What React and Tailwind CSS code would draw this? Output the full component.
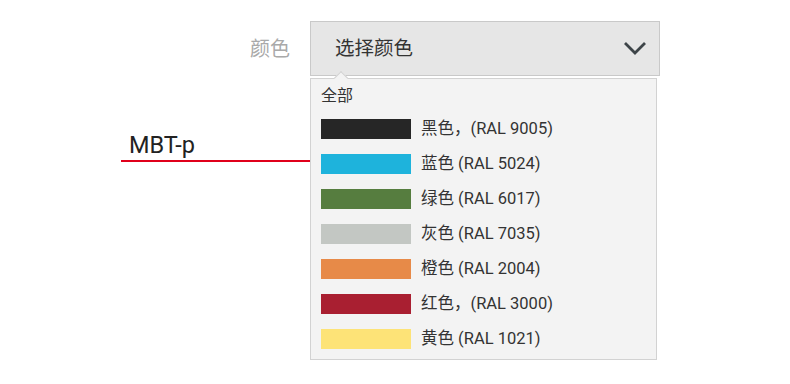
const colors = [
  { name: "黑色，(RAL 9005)", swatch: "bg-[#262626]" },
  { name: "蓝色 (RAL 5024)", swatch: "bg-[#1eb3dc]" },
  { name: "绿色 (RAL 6017)", swatch: "bg-[#567d3f]" },
  { name: "灰色 (RAL 7035)", swatch: "bg-[#c3c7c3]" },
  { name: "橙色 (RAL 2004)", swatch: "bg-[#e78a48]" },
  { name: "红色，(RAL 3000)", swatch: "bg-[#a91f31]" },
  { name: "黄色 (RAL 1021)", swatch: "bg-[#fde377]" },
];

function ColorDropdown() {
  return (
    <div className="absolute left-[310px] top-[78px] w-[347px] border border-[#d2d2d2] bg-[#f3f3f3] pb-[10px]">
      {/* notch */}
      <div className="absolute left-[25px] top-[-6px] h-[10px] w-[10px] rotate-45 border-l border-t border-[#d2d2d2] bg-[#f3f3f3]" />
      <div className="relative px-[10px] pt-[5px] text-[16px] leading-[24px] text-[#333]">
        全部
      </div>
      <ul className="relative mt-[11px] flex flex-col gap-[15px] px-[10px]">
        {colors.map((color) => (
          <li key={color.name} className="flex items-center gap-[10px]">
            <span className={`h-[20px] w-[90px] ${color.swatch}`} />
            <span className="text-[16.5px] leading-[20px] text-[#333]">
              {color.name}
            </span>
          </li>
        ))}
      </ul>
    </div>
  );
}

export default function App() {
  return (
    <div
      className="relative h-[384px] w-[790px] overflow-hidden bg-white"
      style={{ fontFamily: 'Roboto, "Noto Sans CJK SC", sans-serif' }}
    >
      <div className="flex items-center pt-[21px]">
        <div className="w-[290px] text-right text-[20px] text-[#a9a9a9]">
          颜色
        </div>
        <div className="ml-[20px] flex h-[55px] w-[350px] items-center justify-between border border-[#c9c9c9] bg-[#e6e6e6] pl-[24px] pr-[12px]">
          <span className="text-[19.5px] text-[#333]">选择颜色</span>
          <svg width="24" height="16" viewBox="0 0 24 16" className="mt-[-2px] text-[#3d4448]">
            <polyline points="2,3 12,13 22,3" fill="none" stroke="currentColor" strokeWidth="2.8" />
          </svg>
        </div>
      </div>

      <div className="ml-[121px] mt-[55px] w-[189px] border-b-2 border-[#e0001b] pb-[1px] pl-[8px] text-[23.5px] leading-[28px] text-[#222]">
        MBT-p
      </div>

      <ColorDropdown />
    </div>
  );
}
